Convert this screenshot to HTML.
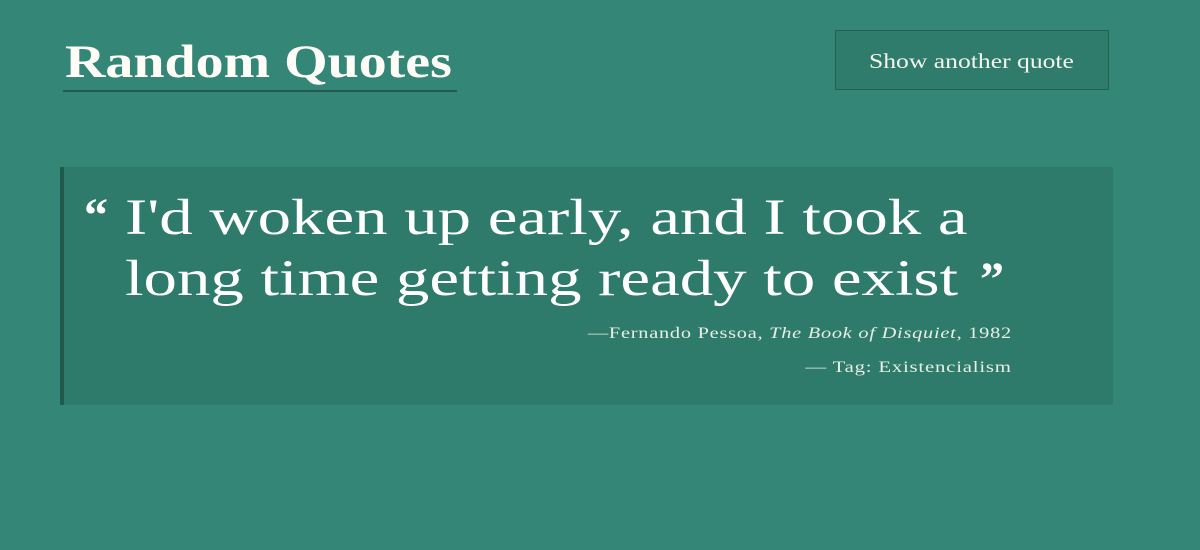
<!DOCTYPE html>
<html><head><style>
html,body{margin:0;padding:0;}
body{width:1200px;height:550px;background:#348777;font-family:"Liberation Serif",serif;color:#fff;position:relative;overflow:hidden;}
.title{position:absolute;left:63px;top:34px;width:394px;height:56px;border-bottom:2px solid #23594e;}
.title span{position:absolute;left:2px;top:0;font-size:47px;font-weight:bold;line-height:56px;color:#fffdf6;white-space:nowrap;transform:scaleX(1.19);transform-origin:0 0;}
.btn{position:absolute;left:835px;top:30px;width:274px;height:60px;box-sizing:border-box;background:#2f7b6c;border:1px solid #24604f;border-radius:2px;}
.btn span{position:absolute;left:33px;top:0;font-size:21px;line-height:60px;color:#f4f4ee;white-space:nowrap;transform:scaleX(1.22);transform-origin:0 0;}
.box{position:absolute;left:60px;top:167px;width:1053px;height:238px;background:#2e7b6c;border-left:4px solid #1f5a4c;box-sizing:border-box;border-radius:0 2px 2px 0;}
.q{position:absolute;left:125px;font-size:51px;line-height:61px;color:#fff;white-space:nowrap;transform:scaleX(1.31);transform-origin:0 0;}
.mark{position:absolute;font-weight:bold;font-size:48px;}
.r{position:absolute;font-size:16px;letter-spacing:0.6px;color:#e8eee6;white-space:nowrap;transform-origin:100% 0;}
</style></head><body>
<div class="title"><span>Random Quotes</span></div>
<div class="btn"><span>Show another quote</span></div>
<div class="box"></div>
<div class="mark" style="left:84px;top:188px;">“</div>
<div class="q" style="top:188px;">I'd woken up early, and I took a</div>
<div class="q" style="top:249px;">long time getting ready to exist</div>
<div class="mark" style="left:980px;top:252px;">”</div>
<div class="r" style="right:188px;top:325px;transform:scaleX(1.27);">—Fernando Pessoa, <i>The Book of Disquiet</i>, 1982</div>
<div class="r" style="right:188px;top:359px;transform:scaleX(1.3);">— Tag: Existencialism</div>
</body></html>
